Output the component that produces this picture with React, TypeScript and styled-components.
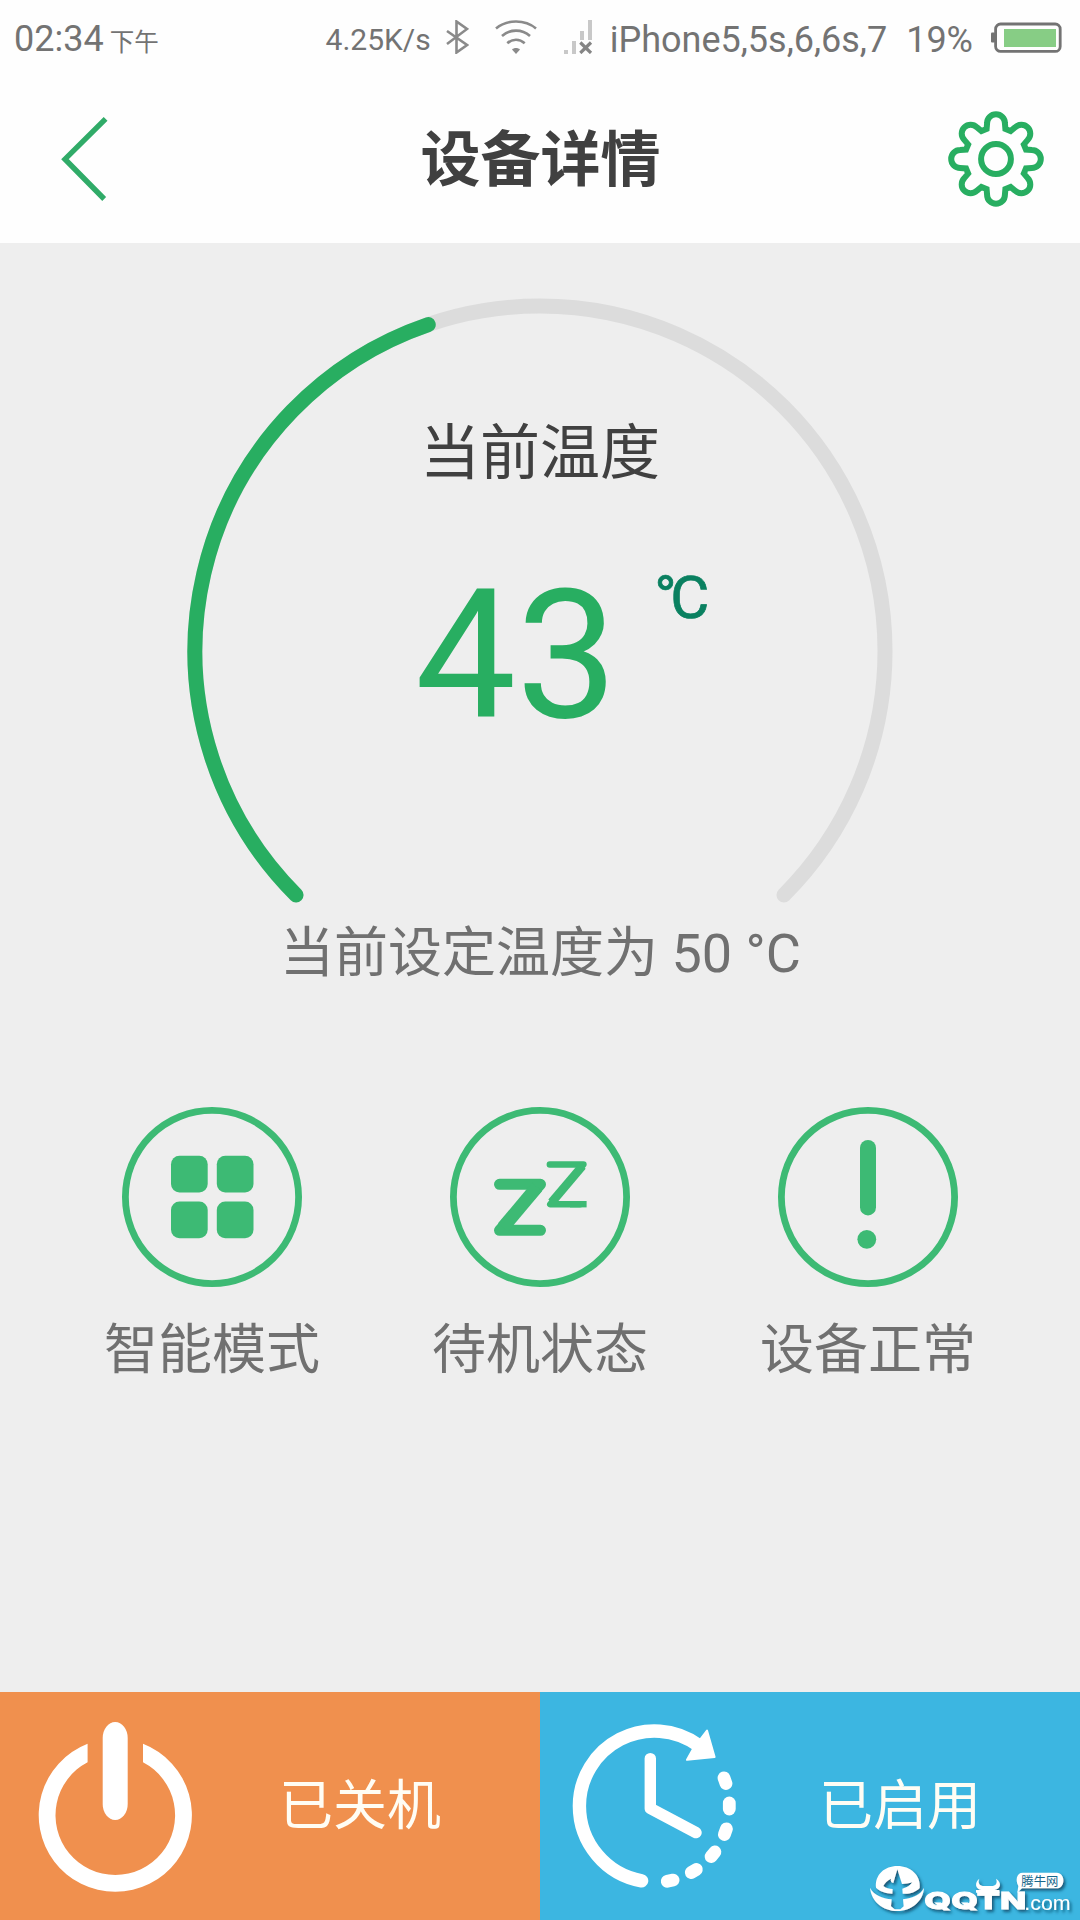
import React from "react";
import styled, { createGlobalStyle } from "styled-components";

const GREEN = "#28ae61";
const SOFT_GREEN = "#3dba74";

const GlobalStyle = createGlobalStyle`
  body {
    margin: 0;
    background: #eeeeee;
    font-family: Roboto, "Noto Sans CJK SC", sans-serif;
  }
`;

const Screen = styled.div`
  position: relative;
  display: flex;
  flex-direction: column;
  width: 1080px;
  height: 1920px;
  overflow: hidden;
  background: #eeeeee;
`;

const StatusBar = styled.div`
  display: flex;
  align-items: center;
  height: 78px;
  box-sizing: border-box;
  padding: 0 18px 0 14px;
  background: #fefefe;
  color: #737373;
  white-space: nowrap;
`;

const Clock = styled.div`
  display: flex;
  align-items: baseline;
  gap: 6px;
  margin-right: auto;
  padding-top: 3px;
  font-size: 36px;
  line-height: 42px;
`;

const Meridiem = styled.span`
  font-size: 24.5px;
`;

const StatusText = styled.span<{ $size: number; $gap: number }>`
  font-size: ${(p) => p.$size}px;
  line-height: 42px;
  margin-right: ${(p) => p.$gap}px;
  padding-top: 2px;
`;

const StatusIcon = styled.svg<{ $gap: number }>`
  flex: none;
  margin-right: ${(p) => p.$gap}px;
  margin-bottom: 4px;
`;

const Header = styled.header`
  display: flex;
  align-items: center;
  justify-content: space-between;
  height: 165px;
  box-sizing: border-box;
  padding: 0 35px 0 60px;
  background: #fefefe;
`;

const IconButton = styled.button`
  display: flex;
  width: 98px;
  height: 98px;
  margin: 0 0 3px;
  padding: 0;
  border: 0;
  background: none;
`;

const Title = styled.h1`
  margin: 1px 24px 0 0;
  font-size: 60px;
  line-height: 72px;
  font-weight: 700;
  color: #404040;
`;

const Main = styled.main`
  flex: 1;
  display: flex;
  flex-direction: column;
  align-items: center;
  padding-top: 55px;
`;

const Gauge = styled.section`
  display: grid;
  width: 706px;
  height: 606px;

  > * {
    grid-area: 1 / 1;
  }
`;

const Readout = styled.div`
  display: flex;
  flex-direction: column;
  padding-top: 120px;
`;

const ReadoutLabel = styled.div`
  font-size: 60px;
  line-height: 72px;
  text-align: center;
  color: #404040;
`;

const ValueRow = styled.div`
  display: flex;
  align-items: flex-start;
  gap: 37px;
  margin: 76px 0 0 228px;
`;

const Value = styled.span`
  font-size: 180px;
  line-height: 180px;
  color: ${GREEN};
`;

const Unit = styled.span`
  padding-top: 2px;
  font-size: 60px;
  line-height: 60px;
  letter-spacing: -6.5px;
  color: #0a8060;
  -webkit-text-stroke: 0.7px #0a8060;
`;

const Target = styled.p`
  margin: 18px 0 121px;
  padding-left: 1px;
  font-size: 54px;
  line-height: 64px;
  color: #707070;
`;

const Modes = styled.section`
  display: grid;
  grid-template-columns: repeat(3, 328px);
`;

const Mode = styled.div`
  display: flex;
  flex-direction: column;
  align-items: center;
  gap: 32px;
  font-size: 54px;
  line-height: 64px;
  color: #707070;
`;

const Footer = styled.footer`
  display: grid;
  grid-template-columns: 1fr 1fr;
  height: 228px;
`;

const Action = styled.button<{ $color: string }>`
  display: flex;
  align-items: center;
  gap: 49px;
  padding: 0;
  border: 0;
  background: ${(p) => p.$color};
  color: #fffdf4;
  font-family: inherit;
  font-size: 54px;
  line-height: 64px;
`;

const ActionLabel = styled.span`
  padding-top: 2px;
`;

const Watermark = styled.svg`
  position: absolute;
  right: 0;
  bottom: 0;
`;

const START = -135;
const SWEEP = 270;
const RADIUS = 345;

function arcPoint(deg: number) {
  const a = (deg * Math.PI) / 180;
  return `${353 + RADIUS * Math.sin(a)} ${353 - RADIUS * Math.cos(a)}`;
}

function arcPath(fraction: number) {
  const sweep = SWEEP * fraction;
  return `M${arcPoint(START)}A${RADIUS} ${RADIUS} 0 ${sweep > 180 ? 1 : 0} 1 ${arcPoint(START + sweep)}`;
}

function GaugeArc({ value }: { value: number }) {
  return (
    <svg width="706" height="606" fill="none" strokeWidth="15" strokeLinecap="round">
      <path d={arcPath(1)} stroke="#dcdcdc" />
      <path d={arcPath(value / 100)} stroke={GREEN} />
    </svg>
  );
}

function gearPath() {
  const parts: string[] = [];
  for (let k = 0; k < 8; k++) {
    const a = (k * Math.PI) / 4;
    const at = (x: number, y: number) =>
      `${(x * Math.cos(a) - y * Math.sin(a)).toFixed(2)} ${(x * Math.sin(a) + y * Math.cos(a)).toFixed(2)}`;
    parts.push(
      `${k ? "L" : "M"}${at(-9.4, -30)}L${at(-8.9, -35.9)}A8.9 8.9 0 0 1 ${at(8.9, -35.9)}L${at(9.4, -30)}`
    );
  }
  return parts.join("") + "Z";
}

function GearIcon() {
  return (
    <svg width="98" height="98" viewBox="-49 -49 98 98" fill="none" stroke={GREEN} strokeWidth="6">
      <path d={gearPath()} />
      <circle r="14.9" />
    </svg>
  );
}

function BackIcon() {
  return (
    <svg width="98" height="98" fill="none" stroke="#30ab68" strokeWidth="5.4">
      <path d="M45.6 8.8L5 49.2L44.2 89" />
    </svg>
  );
}

function ModeIcon({ children }: { children: React.ReactNode }) {
  return (
    <svg width="180" height="180" fill={SOFT_GREEN}>
      <circle cx="90" cy="90" r="86.6" fill="none" stroke={SOFT_GREEN} strokeWidth="6.8" />
      {children}
    </svg>
  );
}

function PowerIcon() {
  return (
    <svg width="230" height="228" fill="#fff">
      <path d="M87.6 51.8A76.6 76.6 0 1 0 143 51.8V70.2A59.8 59.8 0 1 1 87.6 70.2Z" />
      <rect x="102.7" y="30" width="25" height="98" rx="12.5" ry="16" />
    </svg>
  );
}

const TIMER_DOTS = [
  [185, 100.7],
  [189.3, 126],
  [185.4, 151.7],
  [173, 174.3],
  [153.8, 191],
  [130.2, 200.7],
];

function TimerIcon() {
  return (
    <svg width="230" height="228" viewBox="0 12 230 228" fill="none" stroke="#fff" strokeLinecap="round">
      <path d="M101.6 200.8C66 194.5 39.4 163 39.4 126A75 75 0 0 1 158 65" strokeWidth="13.4" />
      <path
        d="M167 50.5L174.6 77L147 79.8L153 69L160.5 59Z"
        fill="#fff"
        strokeWidth="2"
        strokeLinejoin="round"
      />
      <path d="M110.3 78.6V128.4L156 152.6" strokeWidth="11.4" strokeLinejoin="round" />
      {TIMER_DOTS.map(([x, y]) => {
        const a = Math.atan2(y - 126, x - 114);
        const dx = -Math.sin(a) * 3;
        const dy = Math.cos(a) * 3;
        return <path key={y} strokeWidth="12.8" d={`M${x - dx} ${y - dy}L${x + dx} ${y + dy}`} />;
      })}
    </svg>
  );
}

function SiteMark() {
  return (
    <Watermark width="240" height="80" viewBox="0 0 720 240">
      <defs>
        <filter id="lift" x="-10%" y="-10%" width="125%" height="130%">
          <feDropShadow dx="6" dy="7" stdDeviation="4" floodColor="#0c4a66" floodOpacity="0.85" />
        </filter>
      </defs>
      <g filter="url(#lift)" fill="#fff">
        <path d="M108 143C104 104 134 78 172 78C211 78 243 105 239 144C226 158 206 163 188 161L187 146C201 143 211 136 217 127C206 130 196 132 186 132L172 88L160 129C153 127 151 123 153 116C142 121 134 129 130 138C138 145 148 147 158 147L157 161C137 160 119 154 108 143Z" />
        <path d="M90 143C102 166 127 175 155 178L153 199L164 208H181L191 199L189 178C218 175 242 164 252 144C250 182 216 213 172 213C128 213 94 184 90 143Z" />
        <path d="M418 116C403 128 405 146 424 150H408V158H478V150H464C483 145 486 128 468 116C474 130 466 138 455 138H432C420 138 412 130 418 116Z" />
        <path d="M548 98H650C677 98 677 145 650 145H546L532 158L535 138C525 120 530 98 548 98Z" />
        <text
          x="253"
          y="208"
          fontFamily="Inter, sans-serif"
          fontWeight="800"
          fontSize="69"
          stroke="#fff"
          strokeWidth="2.5"
          textLength="306"
          lengthAdjust="spacingAndGlyphs"
        >
          QQTN
        </text>
        <text
          x="553"
          y="209"
          fontFamily="'Liberation Sans', sans-serif"
          fontSize="60"
          textLength="139"
          lengthAdjust="spacingAndGlyphs"
        >
          .com
        </text>
      </g>
      <text x="544" y="138" fontFamily="'Noto Sans CJK SC', sans-serif" fontSize="37" fill="#17678c">
        腾牛网
      </text>
    </Watermark>
  );
}

export default function App() {
  return (
    <Screen>
      <GlobalStyle />
      <StatusBar>
        <Clock>
          02:34<Meridiem>下午</Meridiem>
        </Clock>
        <StatusText $size={30} $gap={15}>4.25K/s</StatusText>
        <StatusIcon $gap={26} width="23" height="34" fill="none" stroke="#8a8a8a" strokeWidth="2.6">
          <path d="M1 11L21 25L10.5 32.5V1.5L21 9L1 24" />
        </StatusIcon>
        <StatusIcon $gap={27} width="42" height="34" fill="none" stroke="#8a8a8a" strokeWidth="2.6">
          <path d="M1 8.5C12 -0.8 30 -0.8 41 8.5M7 16C15 8.8 27 8.8 35 16M12.3 23.3C17.5 18.6 24.5 18.6 29.7 23.3" />
          <path d="M17 29.5C19 27.5 23 27.5 25 29.5L21 34Z" fill="#8a8a8a" stroke="none" />
        </StatusIcon>
        <StatusIcon $gap={17} width="29" height="34" fill="#c8c8c8">
          <path d="M0 30H4V34H0ZM8 21H12V34H8ZM16 11H20V20H16ZM24 0H28V20H24Z" />
          <path d="M16.3 22.5L27 33M27 22.5L16.3 33" stroke="#858585" strokeWidth="3.2" />
        </StatusIcon>
        <StatusText $size={36} $gap={19}>iPhone5,5s,6,6s,7</StatusText>
        <StatusText $size={36} $gap={18}>19%</StatusText>
        <StatusIcon $gap={0} width="71" height="31">
          <rect x="4.6" y="2" width="64.6" height="27.4" rx="5" fill="none" stroke="#737373" strokeWidth="2.8" />
          <rect x="0" y="10.5" width="4" height="10" rx="1" fill="#737373" />
          <rect x="13" y="7" width="52" height="18" fill="#87cd85" />
        </StatusIcon>
      </StatusBar>
      <Header>
        <IconButton aria-label="返回">
          <BackIcon />
        </IconButton>
        <Title>设备详情</Title>
        <IconButton aria-label="设置">
          <GearIcon />
        </IconButton>
      </Header>
      <Main>
        <Gauge>
          <GaugeArc value={43} />
          <Readout>
            <ReadoutLabel>当前温度</ReadoutLabel>
            <ValueRow>
              <Value>43</Value>
              <Unit>°C</Unit>
            </ValueRow>
          </Readout>
        </Gauge>
        <Target>当前设定温度为 50 °C</Target>
        <Modes>
          <Mode>
            <ModeIcon>
              <rect x="49" y="48.7" width="36.7" height="36.7" rx="8.5" />
              <rect x="94.8" y="48.7" width="36.7" height="36.7" rx="8.5" />
              <rect x="49" y="94.6" width="36.7" height="36.7" rx="8.5" />
              <rect x="94.8" y="94.6" width="36.7" height="36.7" rx="8.5" />
            </ModeIcon>
            智能模式
          </Mode>
          <Mode>
            <ModeIcon>
              <g fill="none" stroke={SOFT_GREEN} strokeLinecap="round" strokeLinejoin="round">
                <path d="M49.5 77.3H90.5L49.5 123.3H90.5" strokeWidth="11" />
                <path d="M87 80L53 120.5" strokeWidth="13" strokeLinecap="butt" />
                <path d="M99.8 57.5H133.5L100.2 97.2H130" strokeWidth="6.4" />
                <path d="M132.4 59L101.6 95.4" strokeWidth="8.6" strokeLinecap="butt" />
                <path d="M120 97.2H136.6" strokeWidth="6.4" strokeLinecap="butt" />
              </g>
            </ModeIcon>
            待机状态
          </Mode>
          <Mode>
            <ModeIcon>
              <rect x="82" y="33" width="16" height="75.4" rx="8" />
              <circle cx="88.8" cy="132.3" r="9.4" />
            </ModeIcon>
            设备正常
          </Mode>
        </Modes>
      </Main>
      <Footer>
        <Action $color="#f0904e">
          <PowerIcon />
          <ActionLabel>已关机</ActionLabel>
        </Action>
        <Action $color="#3cb6e1">
          <TimerIcon />
          <ActionLabel>已启用</ActionLabel>
        </Action>
      </Footer>
      <SiteMark />
    </Screen>
  );
}
